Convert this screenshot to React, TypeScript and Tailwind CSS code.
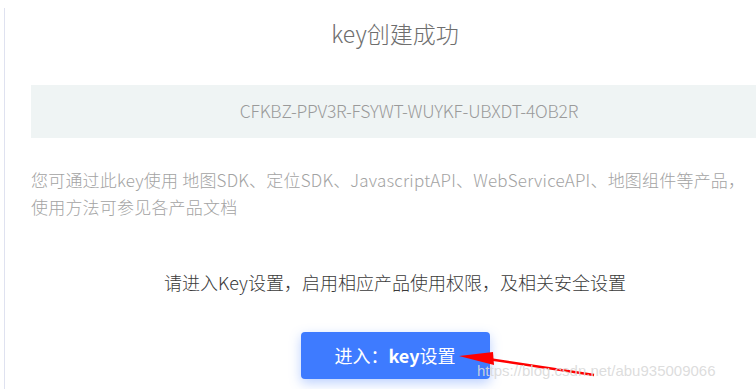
const cjk = "font-['Noto_Sans_CJK_SC','Noto_Sans',sans-serif]";

function Arrow() {
  return (
    <svg className="absolute left-0 top-0" width="756" height="389" viewBox="0 0 756 389">
      <line x1="488" y1="359" x2="594" y2="375" stroke="#ff0000" strokeWidth="2.5" />
      <polygon points="459,356 493,352 494,365" fill="#ff0000" />
    </svg>
  );
}

export default function App() {
  return (
    <div className={`relative w-[756px] h-[389px] overflow-hidden bg-white ${cjk}`}>
      <div className="ml-[4px] mt-[8px] h-[381px] border-l border-[#dfe2f0]">
        <div className="w-[754px] pl-[26px] flex flex-col">
          <h1 className="mt-[9px] h-[32px] text-center text-[23px] leading-[32px] text-[#6e6e6e] font-light">
            key创建成功
          </h1>
          <div className="mt-[36px] w-[756px] h-[53px] bg-[#eff4f4] flex items-center justify-center text-[17.5px] text-[#9a9a9a] font-light tracking-[-0.2px]">
            CFKBZ-PPV3R-FSYWT-WUYKF-UBXDT-4OB2R
          </div>
          <p className="mt-[28px] text-[17px] leading-[27px] text-[#a3a3a3] font-light whitespace-nowrap tracking-[0.2px]">
            您可通过此key使用 地图SDK、定位SDK、JavascriptAPI、WebServiceAPI、地图组件等产品，
            <br />
            使用方法可参见各产品文档
          </p>
          <p className="mt-[48px] text-center text-[18px] leading-[28px] text-[#3a3a3a] font-light">
            请进入Key设置，启用相应产品使用权限，及相关安全设置
          </p>
          <div className="mt-[36px] flex justify-center">
            <button className="w-[189px] h-[47px] rounded-[4px] bg-[#3e7bff] text-white text-[18px] shadow-[0_4px_12px_rgba(62,123,255,0.35)]">
              进入：<span className="font-bold">key</span>设置
            </button>
          </div>
        </div>
      </div>
      <Arrow />
      <div className="absolute left-[477px] top-[361px] text-[15px] leading-[20px] text-[#d9d9d9]/90 font-['Liberation_Sans',sans-serif]">
        https://blog.csdn.net/abu935009066
      </div>
    </div>
  );
}
